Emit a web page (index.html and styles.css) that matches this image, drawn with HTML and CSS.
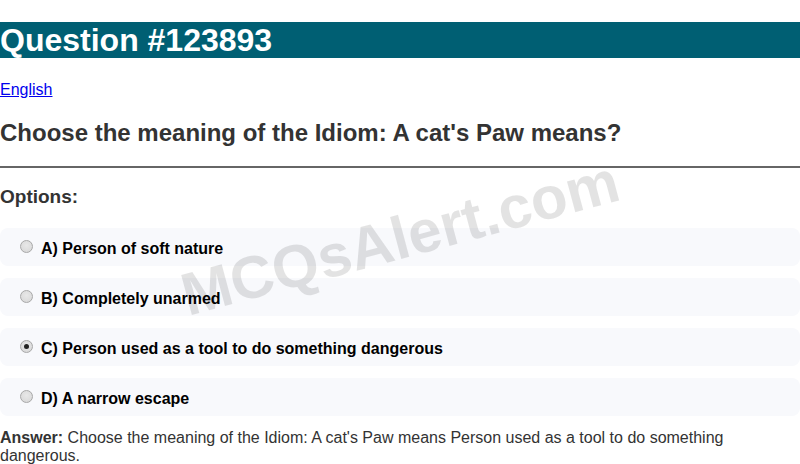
FILE: index.html
```html
<!DOCTYPE html>
<html>
<head>
<meta charset="utf-8">
<link rel="stylesheet" href="styles.css">
</head>
<body>
<div class="page">
  <h1 class="title">Question #123893</h1>
  <p class="lang"><a href="#">English</a></p>
  <h2 class="question">Choose the meaning of the Idiom: A cat's Paw means?</h2>
  <hr class="rule">
  <h3 class="options-title">Options:</h3>
  <div class="options">
    <label class="option"><input type="radio" name="q" class="radio"><span class="option-text">A) Person of soft nature</span></label>
    <label class="option"><input type="radio" name="q" class="radio"><span class="option-text">B) Completely unarmed</span></label>
    <label class="option"><input type="radio" name="q" class="radio" checked><span class="option-text">C) Person used as a tool to do something dangerous</span></label>
    <label class="option"><input type="radio" name="q" class="radio"><span class="option-text">D) A narrow escape</span></label>
  </div>
  <p class="answer"><strong>Answer:</strong> Choose the meaning of the Idiom: A cat's Paw means Person used as a tool to do something dangerous.</p>
  <div class="watermark">MCQsAlert.com</div>
</div>
</body>
</html>
```
FILE: styles.css
```css
html, body {
  margin: 0;
  padding: 0;
  background: #fff;
}
body {
  font-family: "Liberation Sans", Arial, sans-serif;
  font-size: 16px;
  color: #333;
  overflow: hidden;
}
.page {
  position: relative;
  width: 800px;
  height: 464px;
  overflow: hidden;
}
.title {
  margin: 22px 0 23px;
  background: #005f73;
  color: #fff;
  font-size: 32px;
  line-height: 36px;
  font-weight: bold;
}
.lang {
  margin: 0 0 16px;
  line-height: 18px;
}
.lang a {
  color: #0000ee;
}
.question {
  margin: 20px 0 19px;
  font-size: 24px;
  line-height: 28px;
  font-weight: bold;
  color: #333;
}
.rule {
  margin: 0 0 8px;
  border: 0;
  border-top: 2px solid #666;
  height: 0;
}
.options-title {
  margin: 18px 0 20px;
  font-size: 19px;
  line-height: 22px;
  font-weight: bold;
  color: #333;
}
.options {
  display: flex;
  flex-direction: column;
  gap: 12px;
}
.option {
  display: flex;
  align-items: center;
  height: 38px;
  padding-left: 20px;
  background: #f8f9fc;
  border-radius: 8px;
  font-weight: bold;
  color: #000;
}
.option-text {
  padding-top: 3px;
}
.radio {
  appearance: none;
  -webkit-appearance: none;
  box-sizing: border-box;
  margin: -1px 8px 0 0;
  width: 13px;
  height: 13px;
  border-radius: 50%;
  border: 1px solid #a8a8a8;
  background: radial-gradient(circle at 50% 40%, #e8e8e8 0%, #d6d6d6 100%);
  display: flex;
  align-items: center;
  justify-content: center;
}
.radio:checked::after {
  content: "";
  width: 5px;
  height: 5px;
  border-radius: 50%;
  background: #222;
}
.answer {
  margin: 13px 0 0;
  line-height: 18px;
}
.answer strong {
  font-weight: bold;
}
.watermark {
  position: absolute;
  left: 400px;
  top: 238px;
  transform: translate(-50%, -50%) rotate(-15deg);
  font-size: 60px;
  font-weight: bold;
  color: rgba(0, 0, 0, 0.11);
  white-space: nowrap;
  pointer-events: none;
}
```
